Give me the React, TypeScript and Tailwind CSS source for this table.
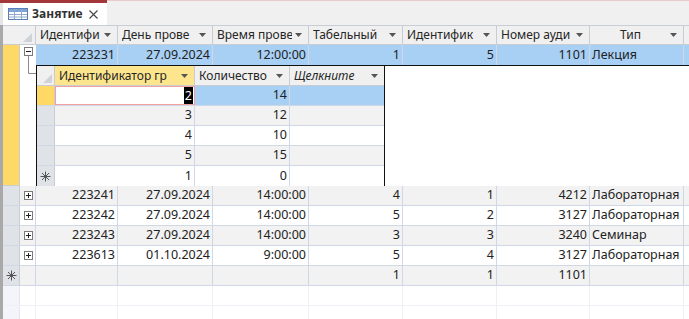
import clsx from "clsx";
import type { ReactNode } from "react";

const font = { fontFamily: '"Noto Sans", "Open Sans", sans-serif' };

const mainCols = [
  "w-[82px]",
  "w-[95px]",
  "w-[96px]",
  "w-[94px]",
  "w-[94px]",
  "w-[93px]",
  "w-[94px]",
];

const subCols = ["w-[140px]", "w-[95px]", "w-[94px]"];

type Row = {
  id: string;
  day: string;
  time: string;
  tab: string;
  ident: string;
  room: string;
  kind: string;
};

const rows: Row[] = [
  { id: "223241", day: "27.09.2024", time: "14:00:00", tab: "4", ident: "1", room: "4212", kind: "Лабораторная" },
  { id: "223242", day: "27.09.2024", time: "14:00:00", tab: "5", ident: "2", room: "3127", kind: "Лабораторная" },
  { id: "223243", day: "27.09.2024", time: "14:00:00", tab: "3", ident: "3", room: "3240", kind: "Семинар" },
  { id: "223613", day: "01.10.2024", time: "9:00:00", tab: "5", ident: "4", room: "3127", kind: "Лабораторная" },
];

const subRows = [
  { g: "3", n: "12" },
  { g: "4", n: "10" },
  { g: "5", n: "15" },
];

const Arrow = () => (
  <svg width="7" height="4" viewBox="0 0 7 4" className="shrink-0">
    <path d="M0 0 H7 L3.5 4 Z" fill="#555" />
  </svg>
);

const Corner = () => (
  <svg width="9" height="9" viewBox="0 0 9 9">
    <path d="M9 0 V9 H0 Z" fill="#cfd3d8" />
  </svg>
);

const Star = () => (
  <svg width="11" height="11" viewBox="0 0 11 11">
    <g stroke="#555" strokeWidth="1">
      <line x1="5.5" y1="0.5" x2="5.5" y2="10.5" />
      <line x1="0.5" y1="5.5" x2="10.5" y2="5.5" />
      <line x1="2" y1="2" x2="9" y2="9" />
      <line x1="9" y1="2" x2="2" y2="9" />
    </g>
  </svg>
);

const PlusBox = () => (
  <svg width="9" height="9" viewBox="0 0 9 9">
    <rect x="0.5" y="0.5" width="8" height="8" fill="#fff" stroke="#7a7a7a" />
    <line x1="2" y1="4.5" x2="7" y2="4.5" stroke="#222" />
    <line x1="4.5" y1="2" x2="4.5" y2="7" stroke="#222" />
  </svg>
);

const Cell = ({
  w,
  children,
  left,
  className,
}: {
  w: string;
  children?: ReactNode;
  left?: boolean;
  className?: string;
}) => (
  <div
    className={clsx(
      "h-full shrink-0 border-r border-[#d0d7e5] overflow-hidden whitespace-nowrap flex items-center px-[2px] text-[#222]",
      left ? "justify-start" : "justify-end",
      w,
      className
    )}
  >
    {children}
  </div>
);

const HeadCell = ({
  w,
  text,
  center,
  italic,
  className,
}: {
  w: string;
  text: string;
  center?: boolean;
  italic?: boolean;
  className?: string;
}) => (
  <div
    className={clsx(
      "h-full shrink-0 border-r border-[#c8ccd4] flex items-center pl-[4px] pr-[6px] gap-[3px] text-[#262626] text-[12px]",
      w,
      className
    )}
  >
    <span
      className={clsx(
        "flex-1 overflow-hidden whitespace-nowrap",
        center && "text-center",
        italic && "italic"
      )}
    >
      {text}
    </span>
    <Arrow />
  </div>
);

const MainRow = ({ r, odd }: { r: Row; odd: boolean }) => (
  <div
    className={clsx(
      "flex h-[20px] border-b border-[#d0d7e5]",
      odd ? "bg-[#f2f2f2]" : "bg-white"
    )}
  >
    <div className="w-[17px] shrink-0 h-full bg-[#dfe3e8] border-r border-[#c8ccd4]" />
    <div className="w-[16px] shrink-0 h-full border-r border-[#d0d7e5] flex items-center pl-[4px]">
      <PlusBox />
    </div>
    <Cell w={mainCols[0]}>{r.id}</Cell>
    <Cell w={mainCols[1]}>{r.day}</Cell>
    <Cell w={mainCols[2]}>{r.time}</Cell>
    <Cell w={mainCols[3]}>{r.tab}</Cell>
    <Cell w={mainCols[4]}>{r.ident}</Cell>
    <Cell w={mainCols[5]}>{r.room}</Cell>
    <Cell w={mainCols[6]} left>
      {r.kind}
    </Cell>
    <div className="flex-1" />
  </div>
);

const SubRow = ({ g, n, odd }: { g: string; n: string; odd: boolean }) => (
  <div
    className={clsx(
      "flex h-[20px] border-b border-[#d0d7e5]",
      odd ? "bg-[#f2f2f2]" : "bg-white"
    )}
  >
    <div className="w-[18px] shrink-0 h-full bg-[#dfe3e8] border-r border-[#c8ccd4]" />
    <Cell w={subCols[0]}>{g}</Cell>
    <Cell w={subCols[1]}>{n}</Cell>
    <Cell w={subCols[2]} className="border-r-0" />
  </div>
);

const TableIcon = () => (
  <svg width="20" height="12" viewBox="0 0 20 12">
    <rect x="0.5" y="0.5" width="19" height="11" fill="#fff" stroke="#5b7fb5" />
    <rect x="1" y="1" width="18" height="3" fill="#7ea4d8" />
    <g stroke="#8fa9cf" strokeWidth="1">
      <line x1="1" y1="6.5" x2="19" y2="6.5" />
      <line x1="1" y1="9" x2="19" y2="9" />
      <line x1="6.5" y1="1" x2="6.5" y2="11" />
      <line x1="13.5" y1="1" x2="13.5" y2="11" />
    </g>
  </svg>
);

export default function App() {
  return (
    <div
      className="w-[689px] h-[319px] overflow-hidden bg-white text-[12.5px]"
      style={font}
    >
      {/* tab strip */}
      <div className="flex h-[25px] bg-[#f0f0f0] border-t border-[#eccaca]">
        <div className="w-[107px] -mt-px border-t-[3px] border-[#a4373a] flex">
          <div className="w-[3px] bg-[#e6e6e6]" />
          <div className="flex-1 bg-white flex items-center pl-[5px] gap-[4px]">
            <TableIcon />
            <span className="font-bold text-[#333] text-[12px]">Занятие</span>
            <svg width="9" height="9" viewBox="0 0 9 9" className="ml-auto mr-[9px]">
              <path d="M0.5 0.5 L8.5 8.5 M8.5 0.5 L0.5 8.5" stroke="#444" strokeWidth="1.1" />
            </svg>
          </div>
        </div>
      </div>

      <div className="flex">
        <div className="w-[3px] shrink-0 bg-[#a9a9a9]" />
        <div className="flex-1 flex flex-col">
          {/* header */}
          <div className="flex h-[20px] bg-[#f0f0f0] border-b border-t border-[#c8ccd4]">
            <div className="w-[33px] shrink-0 h-full border-r border-[#c8ccd4] flex items-end justify-end pr-[3px] pb-[2px]">
              <Corner />
            </div>
            <HeadCell w={mainCols[0]} text="Идентифи" />
            <HeadCell w={mainCols[1]} text="День прове" />
            <HeadCell w={mainCols[2]} text="Время прове" />
            <HeadCell w={mainCols[3]} text="Табельный" />
            <HeadCell w={mainCols[4]} text="Идентифик" />
            <HeadCell w={mainCols[5]} text="Номер ауди" />
            <HeadCell w={mainCols[6]} text="Тип" center />
            <div className="flex-1" />
          </div>

          {/* expanded row */}
          <div className="flex">
            <div className="w-[17px] shrink-0 h-[141px] bg-[#fed966] border-r border-b border-[#c8ccd4]" />
            <div className="flex-1 flex">
              <div className="w-[16px] shrink-0 h-[141px] bg-white">
                <svg width="16" height="141" viewBox="0 0 16 141">
                  <rect x="4.5" y="2.5" width="8" height="8" fill="#fff" stroke="#7a7a7a" />
                  <line x1="6" y1="6.5" x2="11" y2="6.5" stroke="#222" />
                  <path d="M8.5 11 V28.5 H16" fill="none" stroke="#8a8a8a" />
                </svg>
              </div>
              <div className="flex-1 flex flex-col">
                <div className="flex h-[20px] bg-[#a8d0f5]">
                  <Cell w={mainCols[0]}>223231</Cell>
                  <Cell w={mainCols[1]}>27.09.2024</Cell>
                  <Cell w={mainCols[2]}>12:00:00</Cell>
                  <Cell w={mainCols[3]}>1</Cell>
                  <Cell w={mainCols[4]}>5</Cell>
                  <Cell w={mainCols[5]}>1101</Cell>
                  <Cell w={mainCols[6]} left>
                    Лекция
                  </Cell>
                  <div className="flex-1" />
                </div>

                {/* subdatasheet */}
                <div className="flex h-[121px] border-t border-[#111] bg-white">
                  <div className="w-[349px] shrink-0 border-l border-r border-[#111] flex flex-col">
                    <div className="flex h-[20px] bg-[#f0f0f0] border-b border-[#c8ccd4]">
                      <div className="w-[18px] shrink-0 h-full border-r border-[#c8ccd4] flex items-end justify-end pr-[2px] pb-[2px]">
                        <Corner />
                      </div>
                      <HeadCell w={subCols[0]} text="Идентификатор гр" className="bg-[#fde58d]" />
                      <HeadCell w={subCols[1]} text="Количество" />
                      <HeadCell w={subCols[2]} text="Щелкните" italic className="border-r-0" />
                    </div>
                    <div className="flex h-[20px] border-b border-[#d0d7e5] bg-[#a8d0f5]">
                      <div className="w-[18px] shrink-0 h-full bg-[#fed966] border-r border-[#c8ccd4]" />
                      <div
                        className={clsx(
                          "h-full shrink-0 bg-white border border-[#f2a0a0] flex items-center justify-end pr-[1px]",
                          subCols[0]
                        )}
                      >
                        <span className="bg-black text-white px-[1px] leading-[17px]">2</span>
                      </div>
                      <Cell w={subCols[1]}>14</Cell>
                      <Cell w={subCols[2]} className="border-r-0" />
                    </div>
                    {subRows.map((s, i) => (
                      <SubRow key={s.g} g={s.g} n={s.n} odd={i % 2 === 0} />
                    ))}
                    <div className="flex h-[20px] bg-white">
                      <div className="w-[18px] shrink-0 h-full bg-[#dfe3e8] border-r border-[#c8ccd4] flex items-center justify-center">
                        <Star />
                      </div>
                      <Cell w={subCols[0]}>1</Cell>
                      <Cell w={subCols[1]}>0</Cell>
                      <Cell w={subCols[2]} className="border-r-0" />
                    </div>
                  </div>
                  <div className="flex-1" />
                </div>
              </div>
            </div>
          </div>

          {rows.map((r, i) => (
            <MainRow key={r.id} r={r} odd={i % 2 === 0} />
          ))}

          {/* new record row */}
          <div className="flex h-[20px] border-b border-[#d0d7e5] bg-[#f2f2f2]">
            <div className="w-[17px] shrink-0 h-full bg-[#dfe3e8] border-r border-[#c8ccd4] flex items-center justify-center">
              <Star />
            </div>
            <div className="w-[16px] shrink-0 h-full border-r border-[#d0d7e5]" />
            <Cell w={mainCols[0]} />
            <Cell w={mainCols[1]} />
            <Cell w={mainCols[2]} />
            <Cell w={mainCols[3]}>1</Cell>
            <Cell w={mainCols[4]}>1</Cell>
            <Cell w={mainCols[5]}>1101</Cell>
            <Cell w={mainCols[6]} />
            <div className="flex-1" />
          </div>

          {/* empty area */}
          {[0, 1].map((k) => (
            <div key={k} className="flex h-[20px] border-b border-[#eef0f5]">
              <div className="w-[17px] shrink-0 h-full bg-[#f3f5fa] border-r border-[#e4e7ee]" />
              <div className="w-[16px] shrink-0 h-full border-r border-[#eef0f5]" />
              {mainCols.map((c) => (
                <div key={c + k} className={clsx("h-full shrink-0 border-r border-[#eef0f5]", c)} />
              ))}
              <div className="flex-1" />
            </div>
          ))}
        </div>
      </div>
    </div>
  );
}
